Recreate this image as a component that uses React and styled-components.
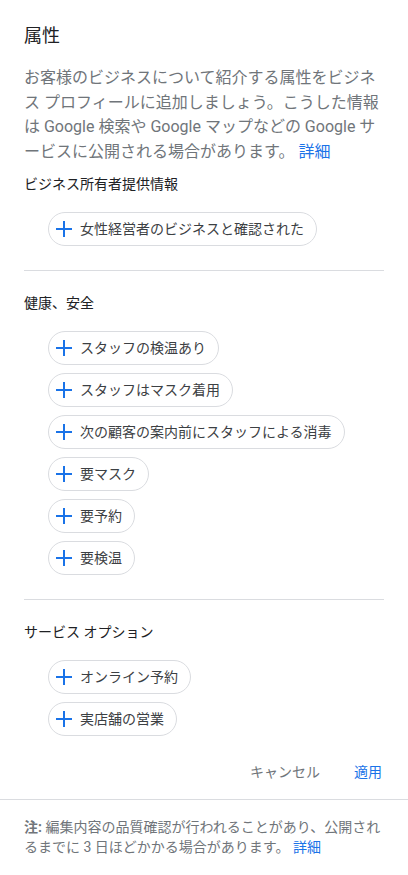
import React from "react";
import styled, { createGlobalStyle } from "styled-components";

const Global = createGlobalStyle`
  html, body {
    margin: 0;
    padding: 0;
    background: #ffffff;
  }
  body {
    font-family: Roboto, "Noto Sans CJK JP", "Noto Sans", sans-serif;
    -webkit-font-smoothing: antialiased;
  }
  * { box-sizing: border-box; }
`;

const Card = styled.div`
  width: 408px;
  min-height: 875px;
  background: #ffffff;
  border-radius: 8px;
  overflow: hidden;
  display: flex;
  flex-direction: column;
`;

const Body = styled.div`
  padding: 24px 24px 0;
  display: flex;
  flex-direction: column;
`;

const Title = styled.h1`
  margin: 0;
  font-size: 18px;
  line-height: 24px;
  font-weight: 400;
  color: #202124;
`;

const Description = styled.p`
  margin: 18px 0 0;
  font-size: 16px;
  line-height: 24.5px;
  color: #70757a;
  line-break: loose;
`;

const Link = styled.a`
  color: #1a73e8;
  text-decoration: none;
`;

const SectionHeading = styled.h2`
  margin: ${(p) => p.$top}px 0 0;
  font-size: 14px;
  line-height: 20px;
  font-weight: 400;
  color: #202124;
`;

const ChipList = styled.div`
  display: flex;
  flex-direction: column;
  align-items: flex-start;
  gap: 8px;
  margin: 18px 0 0 24px;
`;

const Chip = styled.button`
  display: inline-flex;
  align-items: center;
  gap: 8px;
  height: 34px;
  padding: 0 12px 0 7px;
  border: 1px solid #dadce0;
  border-radius: 17px;
  background: #ffffff;
  font-family: inherit;
  font-size: 14px;
  line-height: 20px;
  color: #3c4043;
  cursor: pointer;
`;

const Divider = styled.hr`
  margin: 24px 0 0;
  border: none;
  height: 1px;
  background: #dadce0;
`;

const Actions = styled.div`
  display: flex;
  justify-content: flex-end;
  gap: 18px;
  margin: 26px -6px 0 0;
`;

const ActionButton = styled.button`
  background: none;
  border: none;
  padding: 0 8px;
  font-family: inherit;
  font-size: 14px;
  line-height: 20px;
  color: ${(p) => (p.$primary ? "#1a73e8" : "#70757a")};
  cursor: pointer;
`;

const FooterRule = styled.div`
  margin-top: 17px;
  height: 1px;
  background: #dadce0;
`;

const Footer = styled.p`
  margin: 0;
  padding: 17px 24px;
  font-size: 14px;
  line-height: 20px;
  color: #70757a;
  line-break: loose;
`;

const Strong = styled.b`
  font-weight: 700;
  color: #70757a;
`;

const PlusIcon = () => (
  <svg width="16" height="16" viewBox="0 0 16 16" aria-hidden="true">
    <path d="M8 0v16M0 8h16" stroke="#1a73e8" strokeWidth="2" fill="none" />
  </svg>
);

const sections = [
  {
    title: "ビジネス所有者提供情報",
    top: 10,
    items: ["女性経営者のビジネスと確認された"],
  },
  {
    title: "健康、安全",
    top: 22,
    items: [
      "スタッフの検温あり",
      "スタッフはマスク着用",
      "次の顧客の案内前にスタッフによる消毒",
      "要マスク",
      "要予約",
      "要検温",
    ],
  },
  {
    title: "サービス オプション",
    top: 22,
    items: ["オンライン予約", "実店舗の営業"],
  },
];

export default function App() {
  return (
    <>
      <Global />
      <Card lang="ja">
        <Body>
          <Title>属性</Title>
          <Description>
            お客様のビジネスについて紹介する属性をビジネス プロフィールに追加しましょう。こうした情報は Google 検索や Google マップなどの Google サービスに公開される場合があります。{" "}
            <Link href="#">詳細</Link>
          </Description>
          {sections.map((s, i) => (
            <React.Fragment key={s.title}>
              {i > 0 && <Divider />}
              <SectionHeading $top={s.top}>{s.title}</SectionHeading>
              <ChipList>
                {s.items.map((it) => (
                  <Chip key={it} type="button">
                    <PlusIcon />
                    {it}
                  </Chip>
                ))}
              </ChipList>
            </React.Fragment>
          ))}
          <Actions>
            <ActionButton type="button">キャンセル</ActionButton>
            <ActionButton type="button" $primary>
              適用
            </ActionButton>
          </Actions>
        </Body>
        <FooterRule />
        <Footer>
          <Strong>注:</Strong> 編集内容の品質確認が行われることがあり、公開されるまでに 3 日ほどかかる場合があります。{" "}
          <Link href="#">詳細</Link>
        </Footer>
      </Card>
    </>
  );
}
